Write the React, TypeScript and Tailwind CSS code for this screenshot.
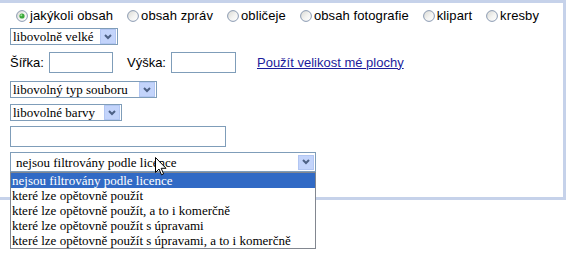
import React from 'react';

const sans = "font-['Liberation_Sans',Arial,sans-serif] text-[13px] text-black";
const serif = "font-['Liberation_Serif','Times_New_Roman',serif] text-[13px] text-black";

function Radio({ label, checked }: { label: string; checked?: boolean }) {
  return (
    <label className="flex items-center">
      <svg width="12" height="12" viewBox="0 0 12 12" className="mr-[2px]">
        <defs>
          <linearGradient id="rg" x1="0" y1="0" x2="1" y2="1">
            <stop offset="0" stopColor="#d8d8d2" />
            <stop offset="0.55" stopColor="#f4f4f2" />
            <stop offset="1" stopColor="#ffffff" />
          </linearGradient>
        </defs>
        <circle cx="6" cy="6" r="5.4" fill="url(#rg)" stroke="#8a9ab2" strokeWidth="1" />
        {checked && <circle cx="6" cy="6" r="2.6" fill="#3aa83a" />}
        {checked && <circle cx="5.3" cy="5.3" r="1" fill="#9fe09a" />}
      </svg>
      <span className="tracking-[0.1px]">{label}</span>
    </label>
  );
}

function ArrowButton() {
  return (
    <div className="w-[16px] h-[15px] bg-[#c3d4fb] border border-[#b2c6f2] flex items-center justify-center">
      <svg width="10" height="8" viewBox="0 0 10 8">
        <path d="M2 2 L5 5 L8 2" fill="none" stroke="#4d6185" strokeWidth="2" />
      </svg>
    </div>
  );
}

function FakeSelect({ text, width, tall }: { text: string; width: string; tall?: boolean }) {
  return (
    <div
      className={`${width} ${tall ? 'h-[20px] pl-[5px]' : 'h-[17px] pl-[2px]'} border border-[#7f9db9] bg-white flex items-center justify-between pr-[1px]`}
    >
      <span className={`${serif} leading-none whitespace-nowrap`}>{text}</span>
      <ArrowButton />
    </div>
  );
}

const licences = [
  'nejsou filtrovány podle licence',
  'které lze opětovně použít',
  'které lze opětovně použít, a to i komerčně',
  'které lze opětovně použít s úpravami',
  'které lze opětovně použít s úpravami, a to i komerčně',
];

export default function App() {
  return (
    <main className="w-[566px] h-[262px] bg-white overflow-hidden">
      <div className="w-[566px] h-[200px] border-t-[3px] border-r-[3px] border-b-[3px] border-[#c6d2ea] pl-[10px] flex flex-col items-start">
        {/* content type */}
        <div className={`${sans} mt-[4px] h-[18px] ml-[6px] flex items-center gap-[14px]`}>
          <Radio label="jakýkoli obsah" checked />
          <Radio label="obsah zpráv" />
          <Radio label="obličeje" />
          <Radio label="obsah fotografie" />
          <Radio label="klipart" />
          <Radio label="kresby" />
        </div>

        <div className="mt-[3px]">
          <FakeSelect text="libovolně velké" width="w-[108px]" />
        </div>

        {/* size */}
        <div className={`${sans} mt-[7px] h-[21px] flex items-center`}>
          <span>Šířka:</span>
          <div className="ml-[5px] w-[64px] h-[21px] border border-[#7f9db9] bg-white" />
          <span className="ml-[14px]">Výška:</span>
          <div className="ml-[5px] w-[65px] h-[21px] border border-[#7f9db9] bg-white" />
          <a href="#" className="ml-[21px] text-[#1c1c9c] underline">
            Použít velikost mé plochy
          </a>
        </div>

        <div className="mt-[8px]">
          <FakeSelect text="libovolný typ souboru" width="w-[147px]" />
        </div>
        <div className="mt-[6px]">
          <FakeSelect text="libovolné barvy" width="w-[112px]" />
        </div>

        <div className="mt-[5px] w-[216px] h-[21px] border border-[#7f9db9] bg-white" />

        {/* licence, opened */}
        <div className="relative mt-[5px]">
          <FakeSelect text="nejsou filtrovány podle licence" width="w-[306px]" tall />
          <ul className={`${serif} absolute left-0 top-full w-[306px] bg-white border border-[#828790] z-10`}>
            {licences.map((l, i) => (
              <li
                key={l}
                className={`h-[15px] leading-[15px] pl-[1px] whitespace-nowrap ${i === 0 ? 'bg-[#316ac5] text-white' : ''}`}
              >
                {l}
              </li>
            ))}
          </ul>
          <svg
            className="absolute left-[145px] top-[5px] z-20"
            width="12"
            height="19"
            viewBox="0 0 12 19"
          >
            <path
              d="M0.5 0.5 L0.5 15.5 L4 12 L6.5 17.8 L8.6 16.9 L6.2 11.3 L11 11.3 Z"
              fill="#ffffff"
              stroke="#000000"
              strokeWidth="1"
              strokeLinejoin="miter"
            />
          </svg>
        </div>
      </div>
    </main>
  );
}
